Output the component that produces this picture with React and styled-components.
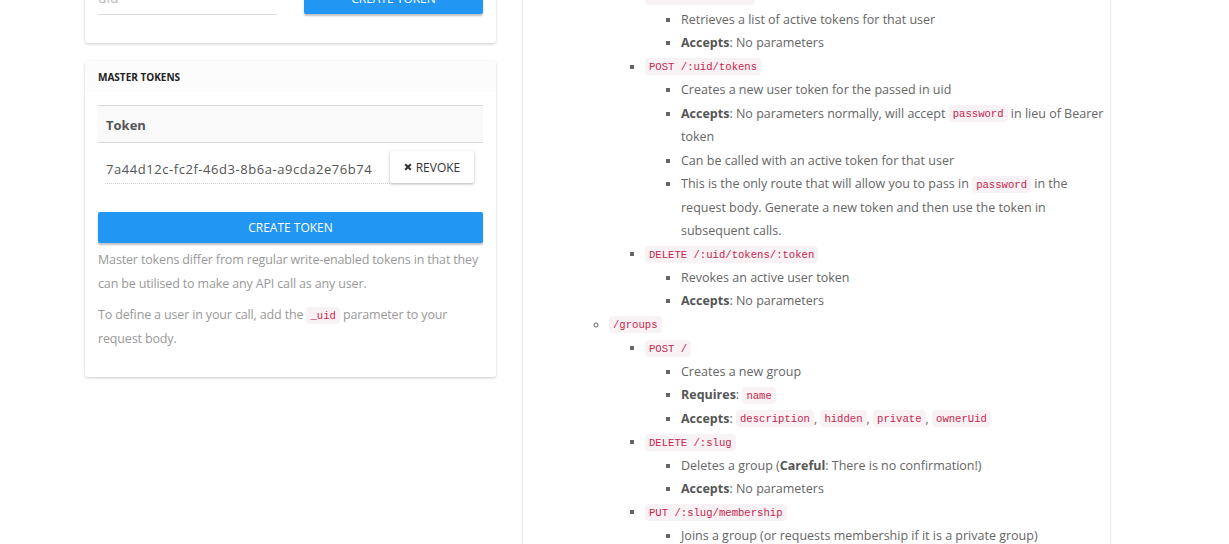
import styled, { createGlobalStyle } from 'styled-components';

const GlobalStyle = createGlobalStyle`
	html, body {
		margin: 0;
		background: #fff;
		overflow: hidden;
	}
	body {
		font-family: 'Open Sans', 'Noto Sans', sans-serif;
		font-size: 12.5px;
		color: #666;
	}
`;

const Page = styled.div`
	display: flex;
	align-items: flex-start;
	gap: 26px;
	padding-left: 85px;
	margin-top: -60px;
`;

const LeftColumn = styled.div`
	width: 411px;
	display: flex;
	flex-direction: column;
	gap: 18px;
`;

const Card = styled.div`
	background: #fff;
	border-radius: 3px;
	box-shadow: 0 1px 3px rgba(0, 0, 0, 0.2);
	padding: ${(p) => p.$padding || '0'};
`;

const CardHeader = styled.div`
	height: 31px;
	display: flex;
	align-items: center;
	padding: 0 13px;
	background: #fcfcfc;
	font-size: 10px;
	font-weight: 700;
	color: #222;
	text-transform: uppercase;
`;

const CardBody = styled.div`
	padding: 13px 13px 27px;
`;

const FormRow = styled.div`
	display: grid;
	grid-template-columns: 1fr 1fr;
	gap: 27px;
	align-items: end;
`;

const UnderlineInput = styled.input`
	border: none;
	border-bottom: 1px solid #ddd;
	height: 33px;
	padding: 0;
	font-family: inherit;
	font-size: 14px;
	color: #555;
	outline: none;
	margin-bottom: -1px;

	&::placeholder {
		color: #bbb;
	}
`;

const PrimaryButton = styled.button`
	display: block;
	width: 100%;
	height: 31px;
	border: none;
	border-radius: 2px;
	background: #2196f3;
	color: #fff;
	font-family: inherit;
	font-size: 12px;
	text-transform: uppercase;
	box-shadow: 0 2px 2px rgba(0, 0, 0, 0.25);
	margin-top: ${(p) => p.$mt || '0'};
	cursor: pointer;
`;

const TokenTable = styled.div`
	border-top: 1px solid #ddd;
`;

const TableHead = styled.div`
	height: 37px;
	box-sizing: border-box;
	display: flex;
	align-items: center;
	padding: 1px 8px 0;
	background: #f9f9f9;
	border-bottom: 1px solid #ddd;
	font-size: 13px;
	font-weight: 700;
	color: #555;
`;

const TableRow = styled.div`
	display: flex;
	align-items: flex-end;
	padding: 8px 9px 9px 7px;
`;

const TokenValue = styled.div`
	flex: 1;
	padding: 0 0 5px 1px;
	border-bottom: 1px dotted #ccc;
	color: #555;
	font-size: 13px;
	letter-spacing: 0.55px;
`;

const RevokeButton = styled.button`
	width: 84px;
	height: 32px;
	margin-bottom: 1px;
	border: none;
	background: #fff;
	border-radius: 2px;
	box-shadow: 0 1px 3px rgba(0, 0, 0, 0.3);
	font-family: inherit;
	font-size: 12px;
	color: #333;
	display: flex;
	align-items: center;
	justify-content: center;
	gap: 4px;

	svg {
		width: 8px;
		height: 8px;
	}
`;

const Note = styled.p`
	margin: ${(p) => p.$mt || '0'} 0 0;
	color: #999;
	line-height: 23.5px;
	letter-spacing: -0.15px;
`;

const Code = styled.code`
	font-family: 'Liberation Mono', 'DejaVu Sans Mono', monospace;
	font-size: 10.6px;
	line-height: 1;
	letter-spacing: 0;
	vertical-align: 1px;
	color: #c7254e;
	background: #f9f2f4;
	padding: 2.5px 4px;
	border-radius: 4px;
`;

const DocPanel = styled.div`
	width: 537px;
	min-height: 700px;
	background: #fff;
	border-left: 1px solid #eee;
	border-right: 1px solid #eee;
	box-shadow: 0 0 2px rgba(0, 0, 0, 0.06);
	padding-left: 50px;
	margin-top: 21px;
`;

const List = styled.ul`
	margin: 0;
	padding-left: 36px;
	list-style-type: ${(p) => p.$marker || 'square'};
	line-height: 23.45px;

	li::marker {
		color: #666;
	}
`;

const Strong = styled.b`
	color: #555;
`;

const Times = () => (
	<svg viewBox='0 0 10 10'>
		<path d='M1.5 1.5 L8.5 8.5 M8.5 1.5 L1.5 8.5' stroke='#333' strokeWidth='2.6' strokeLinecap='butt' />
	</svg>
);

export default function App() {
	return (
		<>
			<GlobalStyle />
			<Page>
				<LeftColumn>
					<Card $padding='41px 13px 29px'>
						<FormRow>
							<UnderlineInput placeholder='uid' />
							<PrimaryButton>Create Token</PrimaryButton>
						</FormRow>
					</Card>
					<Card>
						<CardHeader>Master Tokens</CardHeader>
						<CardBody>
							<TokenTable>
								<TableHead>Token</TableHead>
								<TableRow>
									<TokenValue>7a44d12c-fc2f-46d3-8b6a-a9cda2e76b74</TokenValue>
									<RevokeButton>
										<Times />
										REVOKE
									</RevokeButton>
								</TableRow>
							</TokenTable>
							<PrimaryButton $mt='19px'>Create Token</PrimaryButton>
							<Note $mt='5px'>
								Master tokens differ from regular write-enabled tokens in that they can be utilised to make any API call
								as any user.
							</Note>
							<Note $mt='8px'>
								To define a user in your call, add the <Code>_uid</Code> parameter to your request body.
							</Note>
						</CardBody>
					</Card>
				</LeftColumn>
				<DocPanel>
					<List $marker='circle'>
						<li>
							<Code>/users</Code>
							<List>
								<li>
									<Code>GET /:uid/tokens</Code>
									<List>
										<li>Retrieves a list of active tokens for that user</li>
										<li>
											<Strong>Accepts</Strong>: No parameters
										</li>
									</List>
								</li>
								<li>
									<Code>POST /:uid/tokens</Code>
									<List>
										<li>Creates a new user token for the passed in uid</li>
										<li>
											<Strong>Accepts</Strong>: No parameters normally, will accept <Code>password</Code> in lieu of
											Bearer token
										</li>
										<li>Can be called with an active token for that user</li>
										<li>
											This is the only route that will allow you to pass in <Code>password</Code> in the request
											body. Generate a new token and then use the token in subsequent calls.
										</li>
									</List>
								</li>
								<li>
									<Code>DELETE /:uid/tokens/:token</Code>
									<List>
										<li>Revokes an active user token</li>
										<li>
											<Strong>Accepts</Strong>: No parameters
										</li>
									</List>
								</li>
							</List>
						</li>
						<li>
							<Code>/groups</Code>
							<List>
								<li>
									<Code>POST /</Code>
									<List>
										<li>Creates a new group</li>
										<li>
											<Strong>Requires</Strong>: <Code>name</Code>
										</li>
										<li>
											<Strong>Accepts</Strong>: <Code>description</Code>, <Code>hidden</Code>,{' '}
											<Code>private</Code>, <Code>ownerUid</Code>
										</li>
									</List>
								</li>
								<li>
									<Code>DELETE /:slug</Code>
									<List>
										<li>
											Deletes a group (<Strong>Careful</Strong>: There is no confirmation!)
										</li>
										<li>
											<Strong>Accepts</Strong>: No parameters
										</li>
									</List>
								</li>
								<li>
									<Code>PUT /:slug/membership</Code>
									<List>
										<li>Joins a group (or requests membership if it is a private group)</li>
									</List>
								</li>
							</List>
						</li>
					</List>
				</DocPanel>
			</Page>
		</>
	);
}
